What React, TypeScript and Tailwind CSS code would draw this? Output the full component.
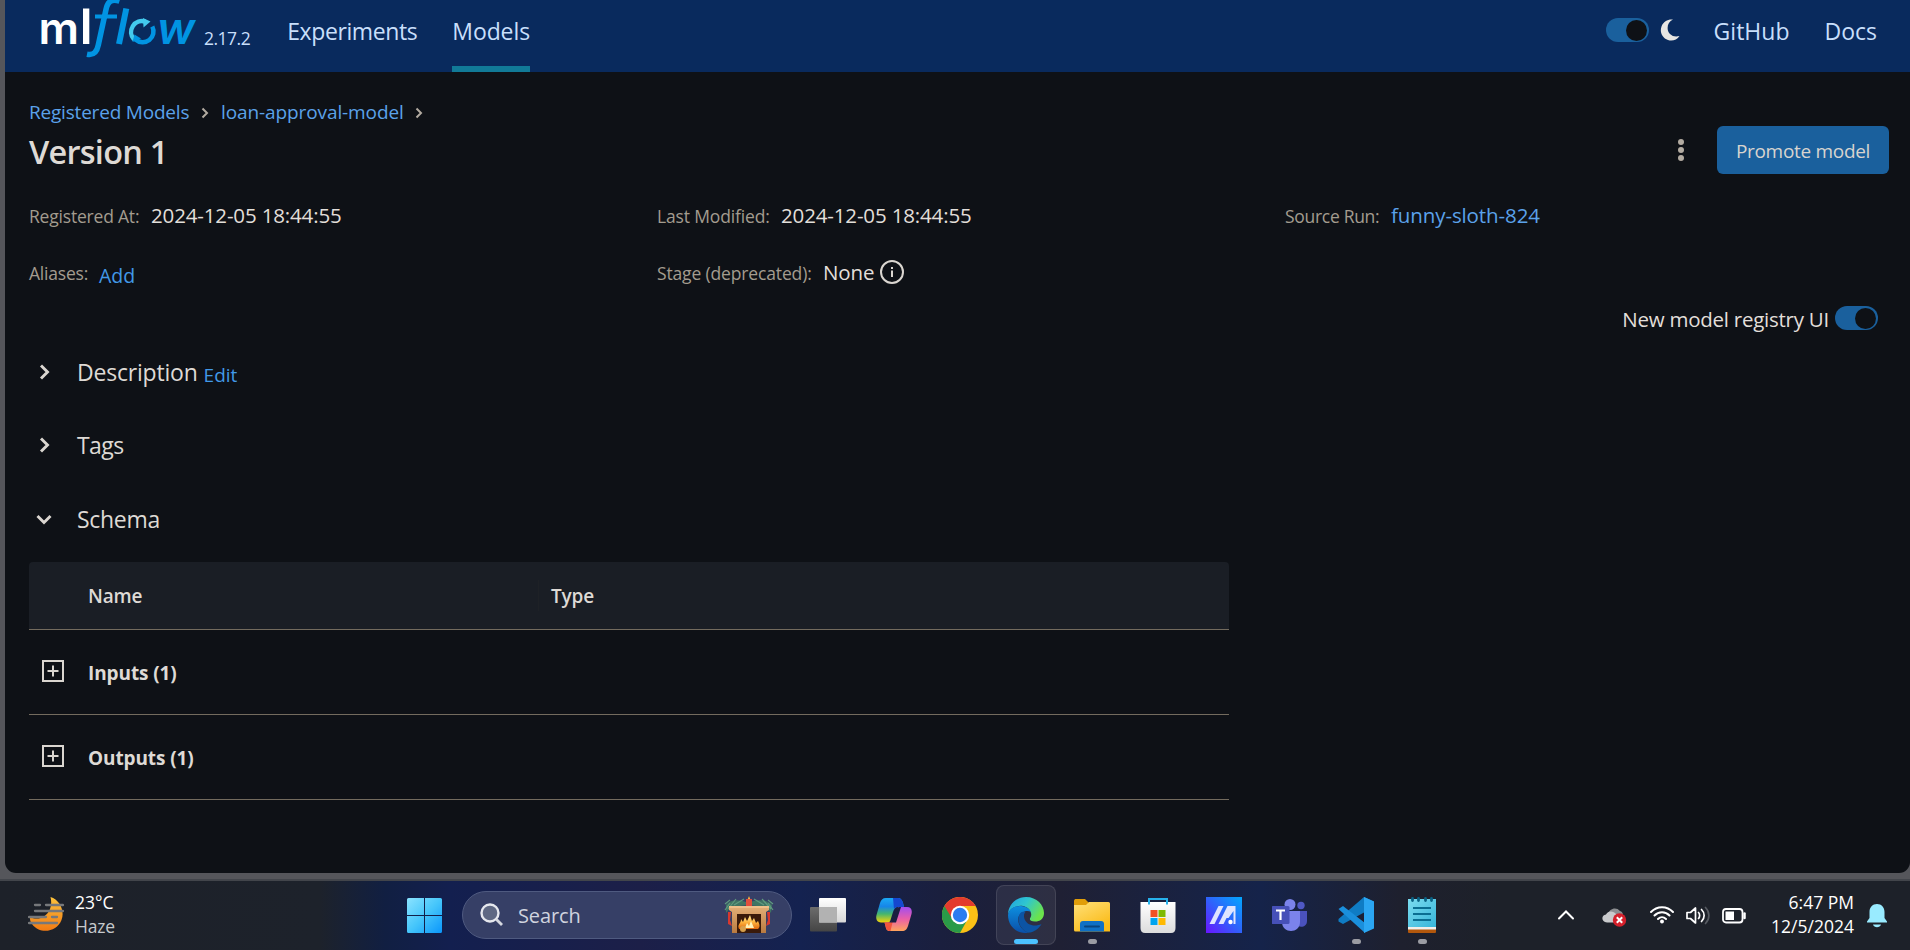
import type { ReactNode } from "react";

function Logo() {
  return (
    <svg width="162" height="62" viewBox="38 0 162 62" className="block shrink-0">
      <text x="38.5" y="44" fontFamily="Inter, sans-serif" fontWeight="600" fontSize="44" fill="#fff" textLength="40.5" lengthAdjust="spacingAndGlyphs">m</text>
      <rect x="83" y="8.5" width="6.3" height="35.5" fill="#fff" />
      <g stroke="#0194e2" fill="none" strokeWidth="5.6">
        <path d="M119.5 1.2C111 -1.5 107.6 2 106 9.500L98.300 45C96.800 52.500 93.500 55.500 87 54.200" />
        <path d="M95 16.500H117" strokeWidth="4" />
        <path d="M126.300 8.500L119 44" strokeWidth="6" />
        <path d="M152.300 26.500A10.800 10.800 0 0 1 135.500 39.500" strokeWidth="4.500" />
      </g>
      <path d="M134 39.500A11 11 0 0 1 145.500 21.600" stroke="#43c9ed" strokeWidth="4.500" fill="none" />
      <path d="M143 18L150.500 21.500L143.500 27.500Z" fill="#43c9ed" />
      <path d="M132.500 42L134.500 34.500L141 38.500Z" fill="#0194e2" />
      <text x="157" y="44" fontFamily="Inter, sans-serif" fontStyle="italic" fontWeight="600" fontSize="44" fill="#0194e2" textLength="38" lengthAdjust="spacingAndGlyphs">w</text>
    </svg>
  );
}

function Toggle() {
  return (
    <span className="flex h-6 w-[43px] shrink-0 items-center justify-end rounded-full bg-[#1a609d] pr-[2px]">
      <span className="size-[21px] rounded-full bg-[#0e1116]" />
    </span>
  );
}

function Chevron({ down = false, className = "" }: { down?: boolean; className?: string }) {
  return (
    <svg width="20" height="20" viewBox="0 0 20 20" fill="none" stroke="#dad6d0" strokeWidth="2.9" className={"shrink-0 " + className}>
      <path d={down ? "M3.500 7L10 13.500L16.500 7" : "M7 3.500L13.500 10L7 16.500"} />
    </svg>
  );
}

function Crumb() {
  return (
    <svg width="8" height="12" viewBox="0 0 8 12" fill="none" stroke="#b2aba1" strokeWidth="2" className="mt-[2px] shrink-0">
      <path d="M1.500 1.500L6 6L1.500 10.500" />
    </svg>
  );
}

const label = "text-[17.5px] text-[#a39c8f]";
const value = "text-[20.5px] text-[#e2dfda]";

function Section({ title, down, tracking, children }: { title: string; down?: boolean; tracking: string; children?: ReactNode }) {
  return (
    <div className="flex h-[30px] items-center">
      <Chevron down={down} className="ml-[5px]" />
      <span className={"ml-[23px] text-[23px] leading-[30px] text-[#dedad5] " + tracking}>{title}</span>
      {children}
    </div>
  );
}

function PlusRow({ text }: { text: string }) {
  return (
    <div className="flex h-[85px] items-center border-b border-[#736b5e] text-[19px] font-bold text-[#dedad5]">
      <svg width="24" height="24" viewBox="0 0 24 24" fill="none" stroke="#dad6d0" strokeWidth="2" className="mb-[2px] ml-3 shrink-0">
        <path d="M2 2H22V22H2ZM12 6.500V17.500M6.500 12H17.500" />
      </svg>
      <span className="ml-[23px] pt-[2px] tracking-[-0.1px]">{text}</span>
    </div>
  );
}

function Slot({ children, dot, active }: { children: ReactNode; dot?: boolean; active?: boolean }) {
  return (
    <div className="flex w-[66px] shrink-0 justify-center pt-1">
      <div className={"flex h-[60px] w-[60px] flex-col items-center rounded-lg pt-[11px] " + (active ? "border border-white/10 bg-white/[0.07]" : "border border-transparent")}>
        <svg width="36" height="36" viewBox="0 0 36 36" className="block shrink-0">{children}</svg>
        {active && <span className="mt-[6px] h-[5px] w-6 shrink-0 rounded-full bg-[#4cc2ff]" />}
        {dot && <span className="mt-[6px] h-[5px] w-[9px] shrink-0 rounded-full bg-[#9b9ca3]" />}
      </div>
    </div>
  );
}

function Gradients() {
  const g = (id: string, stops: [string, string][], x2 = "0", y2 = "1") => (
    <linearGradient id={id} x1="0" y1="0" x2={x2} y2={y2}>
      {stops.map(([o, c]) => <stop key={o} offset={o} stopColor={c} />)}
    </linearGradient>
  );
  return (
    <defs>
      {g("moon", [["0", "#fcc23c"], ["1", "#f07a14"]])}
      {g("win", [["0", "#8be3ff"], ["0.5", "#46c6fb"], ["1", "#0a96fb"]], "1", "1")}
      {g("tvw", [["0", "#ffffff"], ["1", "#d8d8d8"]])}
      {g("tvg", [["0", "#6c6c6c"], ["1", "#454545"]])}
      {g("cpl", [["0", "#1ba9f5"], ["0.35", "#1686e8"], ["0.65", "#45b66e"], ["1", "#f6d408"]])}
      {g("cpr", [["0", "#a24df0"], ["0.5", "#ea5fa8"], ["1", "#ffa45c"]])}
      {g("edg", [["0", "#1f9fe4"], ["0.5", "#2fc6cf"], ["1", "#6be34c"]], "1", "0.5")}
      {g("edb", [["0", "#0d8fe0"], ["1", "#0a4fa8"]])}
      {g("fold", [["0", "#ffe07a"], ["1", "#fabb17"]], "0.6", "1")}
      {g("bag", [["0", "#ffffff"], ["1", "#dcdcdc"]])}
      <linearGradient id="ma" x1="0" y1="1" x2="1" y2="0">
        <stop offset="0" stopColor="#6a14ff" />
        <stop offset="0.5" stopColor="#2f62fb" />
        <stop offset="1" stopColor="#02a8ff" />
      </linearGradient>
      {g("note", [["0", "#7bdcf0"], ["1", "#37b5d9"]], "1", "1")}
      {g("brick", [["0", "#e5b077"], ["1", "#b97a40"]])}
      {g("fire", [["0", "#fff0a0"], ["0.5", "#ffb53e"], ["1", "#e0690f"]])}
    </defs>
  );
}

function Fireplace() {
  return (
    <svg width="50" height="38" viewBox="0 0 50 38" className="shrink-0">
      <path d="M2 9C6 3 16 3 24 7C32 3 43 3 48 9L47 17L42 11L24 9L7 11L2 17Z" fill="#3f7563" />
      <path d="M1 8L6 4M4 13L12 3M10 9L20 3M30 3L40 9M38 3L47 13M44 4L49 8M1 14L6 7M49 14L44 7" stroke="#5f9a7f" strokeWidth="1.200" />
      <path d="M22 3H28V10H22Z" fill="#e04f3d" />
      <path d="M25 0L26.200 3H23.800Z" fill="#ffb53e" />
      <path d="M5 10H45V14L42 16V37H8V16L5 14Z" fill="url(#brick)" />
      <path d="M5 10H45V12H5Z" fill="#efc08a" />
      <path d="M13 18H37V37H13Z" fill="#3a1a0a" />
      <path d="M15 33C13 28 17 28 17 23L19 26L21 21L23 25L26 19L28 25L30 22L32 27L34 25C36 29 36 31 34 33Z" fill="url(#fire)" />
      <path d="M21 32L23 27L25 30L27 25L30 32Z" fill="#fff3b8" />
      <circle cx="19" cy="33" r="3" fill="#d7a04c" />
      <path d="M4 16L7 16L6 24L8 30L4 28ZM46 16L43 16L44 24L42 30L46 28Z" fill="#d8382f" />
    </svg>
  );
}

function Taskbar() {
  return (
    <div className="flex h-[69px] shrink-0 bg-[linear-gradient(90deg,#1d2129_0px,#1d222b_320px,#111f42_385px,#131f4f_450px,#1c1f48_640px,#142250_800px,#1a1f3e_940px,#1f2034_1060px,#15234a_1260px,#1e202e_1400px,#1d2129_1500px)] text-white">
      <svg width="36" height="36" viewBox="0 0 36 36" className="ml-7 mt-4 shrink-0">
        <Gradients />
        <path d="M22.500 0C32 3 37 14 33.500 23C29 35 12 38 4 27C2.500 25 1.800 23 2 20C10 24 19 20 22 12C23.500 8 23.500 4 22.500 0Z" fill="url(#moon)" />
        <path d="M7 8H12M18 8H35M7 14H35M1 20H18M24 20H29M1 26H29" stroke="#76787b" strokeWidth="2.300" strokeLinecap="round" />
      </svg>
      <div className="ml-[11px] w-[332px] shrink-0 pt-[9px] text-[17.5px] leading-6">
        <div>23°C</div>
        <div className="tracking-[-0.2px] text-[#c6c9cd]">Haze</div>
      </div>
      <svg width="36" height="36" viewBox="0 0 36 36" className="mt-[17px] shrink-0">
        <path d="M0 1.500Q0 0 1.500 0H17V17H0ZM18 0H33.500Q35 0 35 1.500V17H18ZM0 18H17V35H1.500Q0 35 0 33.500ZM18 18H35V33.500Q35 35 33.500 35H18Z" fill="url(#win)" />
      </svg>
      <div className="ml-[19px] mt-[10px] flex h-12 w-[330px] shrink-0 items-center rounded-full border border-[#4f5a80] bg-[#363f66] pl-[17px] pr-[17px]">
        <svg width="24" height="24" viewBox="0 0 24 24" fill="none" className="shrink-0">
          <circle cx="10" cy="10" r="8.500" stroke="#e6e8ee" strokeWidth="2.400" fill="#5f6883" />
          <path d="M16.500 16.500L22 22" stroke="#d5d8e0" strokeWidth="2.800" />
        </svg>
        <span className="ml-[14px] flex-1 pt-px text-[20px] tracking-[-0.1px] text-[#d0d3df]">Search</span>
        <Fireplace />
      </div>
      <div className="ml-[3px] flex">
        <Slot>
          <rect x="0" y="10" width="27" height="24.500" rx="1" fill="url(#tvg)" />
          <rect x="9" y="1" width="27" height="24.500" rx="1" fill="url(#tvw)" />
          <rect x="9" y="10" width="18" height="15.500" fill="#b2b2b2" />
        </Slot>
        <Slot>
          <path d="M10 1H22C25 1 26 3 27 6L28 10H22C19 10 18 12 17 15L14.500 23C14 25 13 25.500 11 25.500H5C1 25.500 -0.500 22 0.500 18L4 6C5 3 6.500 1 10 1Z" fill="url(#cpl)" />
          <path d="M17 1H22C25 1 26 3 27 6L28 10H22C20 10 19 10.500 18 12Z" fill="#1547cf" />
          <path d="M26 34H14C11 34 10 32 9.500 29L8.500 25.500H13C16 25.500 17 23 18 20L20.500 12.500C21.500 10.500 23 10 25 10H31C35 10 36.500 13 35.500 17L32 29C31 32 29.500 34 26 34Z" fill="url(#cpr)" />
          <path d="M8.500 25.500H13C15 25.500 16 25 17 23.500L14.500 34C11 34 10 32 9.500 29Z" fill="#f2553d" />
          <path d="M20.500 11.500L23.500 10H25L20 25.500H13.500C15 25 15.600 24 16 22.500L19 13.500Z" fill="#1a1f40" />
        </Slot>
        <Slot>
          <circle cx="18" cy="18" r="18" fill="#fbc116" />
          <path d="M18 18L2.400 9A18 18 0 0 0 18 36L26 21.500Z" fill="#2a9b48" />
          <path d="M2.400 9A18 18 0 0 1 33.600 9H18L10 21.500Z" fill="#e33b2e" />
          <circle cx="18" cy="18" r="9.200" fill="#fff" />
          <circle cx="18" cy="18" r="7.200" fill="#2b7cf0" />
        </Slot>
        <Slot active>
          <path d="M0 18C0 8 8 0 18 0C29 0 36 8 36 16C36 22 32 24.500 27 24.500C22 24.500 21 22.500 22.500 20.500C25 16 21 10 15 9C8 8 1 12 0 18Z" fill="url(#edg)" />
          <path d="M0 18C1 12 7 8.500 13 9C18 9.300 22 12 23 15C19 12.500 12 15 10.500 20C9 26 13 33 20 35.700C10 37.500 0 30 0 18Z" fill="url(#edb)" />
          <path d="M12.500 16C8 21 11 32 20 35.800C26 35.500 31 31.500 33.500 27C27 30 19 28.500 16.500 22C15.500 19 16 16.500 17.500 14.800C15 14.500 13.500 15 12.500 16Z" fill="#0c54a4" />
        </Slot>
        <Slot dot>
          <path d="M0 4C0 2.500 1 2 2 2H11L15 6V12H0Z" fill="#e09d09" />
          <path d="M0 8H12L15 5H34.500Q36 5 36 6.500V34.500H1.500Q0 34.500 0 33Z" fill="url(#fold)" />
          <path d="M6 34.500V27Q6 24 9 24H27Q30 24 30 27V34.500Z" fill="#0f70c5" />
          <path d="M11 29.500H25" stroke="#09457f" strokeWidth="2" strokeLinecap="round" />
        </Slot>
        <Slot>
          <path d="M0.500 5H35.500V31Q35.500 36 31 36H5Q0.500 36 0.500 31Z" fill="url(#bag)" />
          <path d="M9 7.500V2H27V7.500" fill="none" stroke="#27b2ec" strokeWidth="2" />
          <path d="M10.500 13H17.500V20H10.500Z" fill="#f25022" />
          <path d="M18.500 13H25.500V20H18.500Z" fill="#7fba00" />
          <path d="M10.500 21H17.500V28H10.500Z" fill="#00a4ef" />
          <path d="M18.500 21H25.500V28H18.500Z" fill="#ffb900" />
        </Slot>
        <Slot>
          <rect width="36" height="36" fill="url(#ma)" />
          <path d="M3.500 27L12.500 9H17.500L8.500 27ZM12.500 27L21.500 9H26.500L17.500 27ZM19 21L26 9H29.500V27H27.500V14L22.500 21Z" fill="#dfe4ff" />
          <circle cx="24.500" cy="25" r="2.200" fill="#fff" />
        </Slot>
        <Slot>
          <circle cx="29" cy="8.500" r="3.700" fill="#4f58c4" />
          <path d="M25 14H35V24C35 29 30 31 26 29Z" fill="#4a52bd" />
          <circle cx="18" cy="7.500" r="5.500" fill="#7b83eb" />
          <path d="M10 14H28V25C28 37 10 37 10 25Z" fill="#7b83eb" />
          <rect x="-0.500" y="9" width="18" height="18" rx="1.500" fill="#4650b8" />
          <path d="M4 13.500H13M8.500 13.500V23" stroke="#fff" strokeWidth="2.200" />
        </Slot>
        <Slot dot>
          <path d="M26 0L36 4.500V10L5 27L0.500 24.500V22Z" fill="#0f7cc4" />
          <path d="M0.500 12L5 9L27 26V36Z" fill="#1a8fdc" />
          <path d="M26 0L36 4.500V31.500L26 36Z" fill="#2ba6f2" />
        </Slot>
        <Slot dot>
          <path d="M4 31H32V35Q32 36 31 36H5Q4 36 4 35Z" fill="#b2570c" />
          <path d="M4 28H32V32.500H4Z" fill="#f1eeea" />
          <path d="M4 2H32V30H4Z" fill="url(#note)" />
          <path d="M9 11H27M9 17H27M9 23H27" stroke="#0a6e92" strokeWidth="2" />
          <path d="M8.500 1.500V3.500M14.500 1.500V3.500M21.500 1.500V3.500M27.500 1.500V3.500" stroke="#0a6385" strokeWidth="2.800" strokeLinecap="round" />
        </Slot>
      </div>
      <svg width="24" height="24" viewBox="0 0 24 24" fill="none" stroke="#fff" strokeWidth="2" strokeLinecap="round" className="ml-[99px] mt-[22px] shrink-0">
        <path d="M5 15.500L12 8.500L19 15.500" />
      </svg>
      <svg width="26" height="24" viewBox="0 0 26 24" className="ml-6 mt-6 shrink-0">
        <path d="M6 9C7 4 14 1 18 6C21 7 22 10 20 14L8 17Z" fill="#8d8f92" />
        <path d="M5 17.500C-1 17 -1 10 4 9.500C6 5 12 6 14 9L17 17.500Z" fill="#c9cacc" />
        <circle cx="17.500" cy="15" r="6.700" fill="#d4202b" />
        <path d="M14.800 12.300L20.200 17.700M20.200 12.300L14.800 17.700" stroke="#fff" strokeWidth="2" />
      </svg>
      <svg width="24" height="20" viewBox="0 0 24 20" fill="none" stroke="#fff" strokeWidth="2" strokeLinecap="round" className="ml-[22px] mt-6 shrink-0">
        <path d="M1 7C7 0.500 17 0.500 23 7M4.500 10.500C8.500 6 15.500 6 19.500 10.500M8 14C10.500 11.500 13.500 11.500 16 14" />
        <circle cx="12" cy="16.500" r="1.200" fill="#fff" strokeWidth="1.500" />
      </svg>
      <svg width="24" height="20" viewBox="0 0 24 20" fill="none" stroke="#fff" strokeWidth="1.700" strokeLinecap="round" strokeLinejoin="round" className="ml-3 mt-6 shrink-0">
        <path d="M1 7.500H4.500L9.500 3V18L4.500 13.500H1ZM12.500 7.500C14 9 14 12 12.500 13.500M15.500 4.500C19 8 19 13 15.500 16.500" />
        <path d="M19.500 2.500C24 7 24 14 19.500 18.500" stroke="#565a61" />
      </svg>
      <svg width="24" height="20" viewBox="0 0 24 20" fill="none" stroke="#fff" strokeWidth="1.800" className="ml-3 mt-6 shrink-0">
        <rect x="1" y="4" width="19.500" height="13.500" rx="3" />
        <rect x="3.500" y="6.500" width="8.500" height="8.500" fill="#fff" stroke="none" />
        <path d="M22.500 8.500V13" strokeWidth="2.500" strokeLinecap="round" />
      </svg>
      <div className="w-[108px] shrink-0 pt-[9px] text-right text-[17.5px] leading-6">
        <div>6:47 PM</div>
        <div>12/5/2024</div>
      </div>
      <svg width="20" height="24" viewBox="0 0 20 24" className="ml-[13px] mt-[23px] shrink-0">
        <path d="M10 0C14.500 0 17.500 3.500 17.500 8V14L20 17.500V18.500H0V17.500L2.500 14V8C2.500 3.500 5.500 0 10 0ZM6 20.500H14C13 24 7 24 6 20.500Z" fill="#99ebff" />
      </svg>
    </div>
  );
}

export default function App() {
  return (
    <div className="flex h-[950px] w-[1910px] flex-col overflow-hidden bg-[#55565b] font-['Open_Sans','Noto_Sans',sans-serif] whitespace-nowrap">
      <div className="ml-[5px] flex h-[873px] shrink-0 flex-col overflow-hidden rounded-b-[11px] bg-[#0e1116]">
        <header className="flex h-[72px] shrink-0 bg-[#092a5d] text-[23px] leading-[62px] text-[#c8dffb]">
          <div className="ml-[33px] flex">
            <Logo />
          </div>
          <span className="ml-1 mt-6 text-[17.5px] leading-7 tracking-[-0.5px]">2.17.2</span>
          <span className="ml-[37px] tracking-[-0.4px]">Experiments</span>
          <span className="ml-[35px] w-[78px] border-b-[6px] border-[#117a97] tracking-[-0.1px]">Models</span>
          <div className="ml-auto flex pr-[33px]">
            <div className="mt-[18px]">
              <Toggle />
            </div>
            <svg width="20" height="24" viewBox="0 0 20 24" className="ml-[11px] mt-[18px]">
              <path d="M13 1.500C7 4 6 12 10 16C12.500 18.500 16 19 19.500 18C17 22 12 23.500 8 22C2 20 -0.500 14 1.500 8.500C3.500 3 8 1 13 1.500Z" fill="#e8e6e3" />
            </svg>
            <span className="ml-[34px]">GitHub</span>
            <span className="ml-[35px]">Docs</span>
          </div>
        </header>

        <main className="flex flex-col pl-6 pt-[26px]">
          <nav className="flex h-7 items-center text-[19px] leading-7 text-[#5ba2ea]">
            <span className="w-[172px] tracking-[-0.2px]">Registered Models</span>
            <Crumb />
            <span className="ml-3 w-[194px] tracking-[-0.1px]">loan-approval-model</span>
            <Crumb />
          </nav>
          <div className="flex h-12">
            <h1 className="text-[32.5px] font-semibold leading-[51px] tracking-[-0.75px] text-[#dedad5]">Version 1</h1>
            <div className="ml-auto mr-[21px] flex items-center">
              <svg width="8" height="24" viewBox="0 0 8 24" fill="#b2aba1" className="mr-8">
                <circle cx="4" cy="4" r="3" />
                <circle cx="4" cy="12" r="3" />
                <circle cx="4" cy="20" r="3" />
              </svg>
              <button className="flex h-12 w-[172px] items-center justify-center rounded-md bg-[#1a609d] pt-[2px] text-[19px] tracking-[-0.3px] text-[#d8d4cf]">Promote model</button>
            </div>
          </div>

          <div className="mt-[26px] grid h-[87px] grid-cols-[628px_628px_1fr] grid-rows-[57px_30px] leading-[30px]">
            <div className="flex items-baseline">
              <span className={label + " w-[122px] tracking-[-0.2px]"}>Registered At:</span>
              <span className={value + " tracking-[-0.15px]"}>2024-12-05 18:44:55</span>
            </div>
            <div className="flex items-baseline">
              <span className={label + " w-[124px] tracking-[-0.15px]"}>Last Modified:</span>
              <span className={value + " tracking-[-0.15px]"}>2024-12-05 18:44:55</span>
            </div>
            <div className="flex items-baseline">
              <span className={label + " w-[106px] tracking-[-0.3px]"}>Source Run:</span>
              <span className="text-[20.5px] tracking-[-0.1px] text-[#5ba2ea]">funny-sloth-824</span>
            </div>
            <div className="flex items-start">
              <span className={label + " w-[70px] leading-8 tracking-[-0.2px]"}>Aliases:</span>
              <span className="text-[19.5px] leading-[38px] text-[#4299e8]">Add</span>
            </div>
            <div className="flex items-baseline">
              <span className={label + " w-[166px] tracking-[-0.15px]"}>Stage (deprecated):</span>
              <span className={value + " tracking-[-0.1px]"}>None</span>
              <svg width="24" height="24" viewBox="0 0 24 24" fill="none" stroke="#dad6d0" strokeWidth="2" className="ml-[6px] mt-[3px] self-start">
                <circle cx="12" cy="12" r="11" />
                <path d="M12 10.500V17M12 7V9" />
              </svg>
            </div>
          </div>

          <div className="mt-[19px] flex h-6 items-center justify-end pr-8">
            <span className={value + " mr-[6px] pt-[2px] leading-[26px] tracking-[-0.25px]"}>New model registry UI</span>
            <Toggle />
          </div>

          <div className="mt-[27px] flex flex-col">
            <Section title="Description" tracking="tracking-[-0.2px]">
              <span className="ml-[6px] pt-[6px] text-[19px] leading-[36px] text-[#4299e8]">Edit</span>
            </Section>
            <div className="h-[43px]" />
            <Section title="Tags" tracking="tracking-[-0.6px]" />
            <div className="h-11" />
            <Section title="Schema" tracking="tracking-[-0.3px]" down />
          </div>

          <div className="mt-7 w-[1200px]">
            <div className="flex h-[68px] items-center rounded-t-[4px] border-b border-[#736b5e] bg-[#1a1e25] text-[19px] font-semibold text-[#dedad5]">
              <span className="w-[509px] pl-[59px] pt-[2px] tracking-[-0.2px]">Name</span>
              <span className="h-[31px] w-px bg-[#1e2126]" />
              <span className="ml-3 pt-[2px] tracking-[-0.2px]">Type</span>
            </div>
            <PlusRow text="Inputs (1)" />
            <PlusRow text="Outputs (1)" />
          </div>
        </main>
      </div>
      <div className="h-2 shrink-0 border-b-2 border-[#42454b]" />
      <Taskbar />
    </div>
  );
}
